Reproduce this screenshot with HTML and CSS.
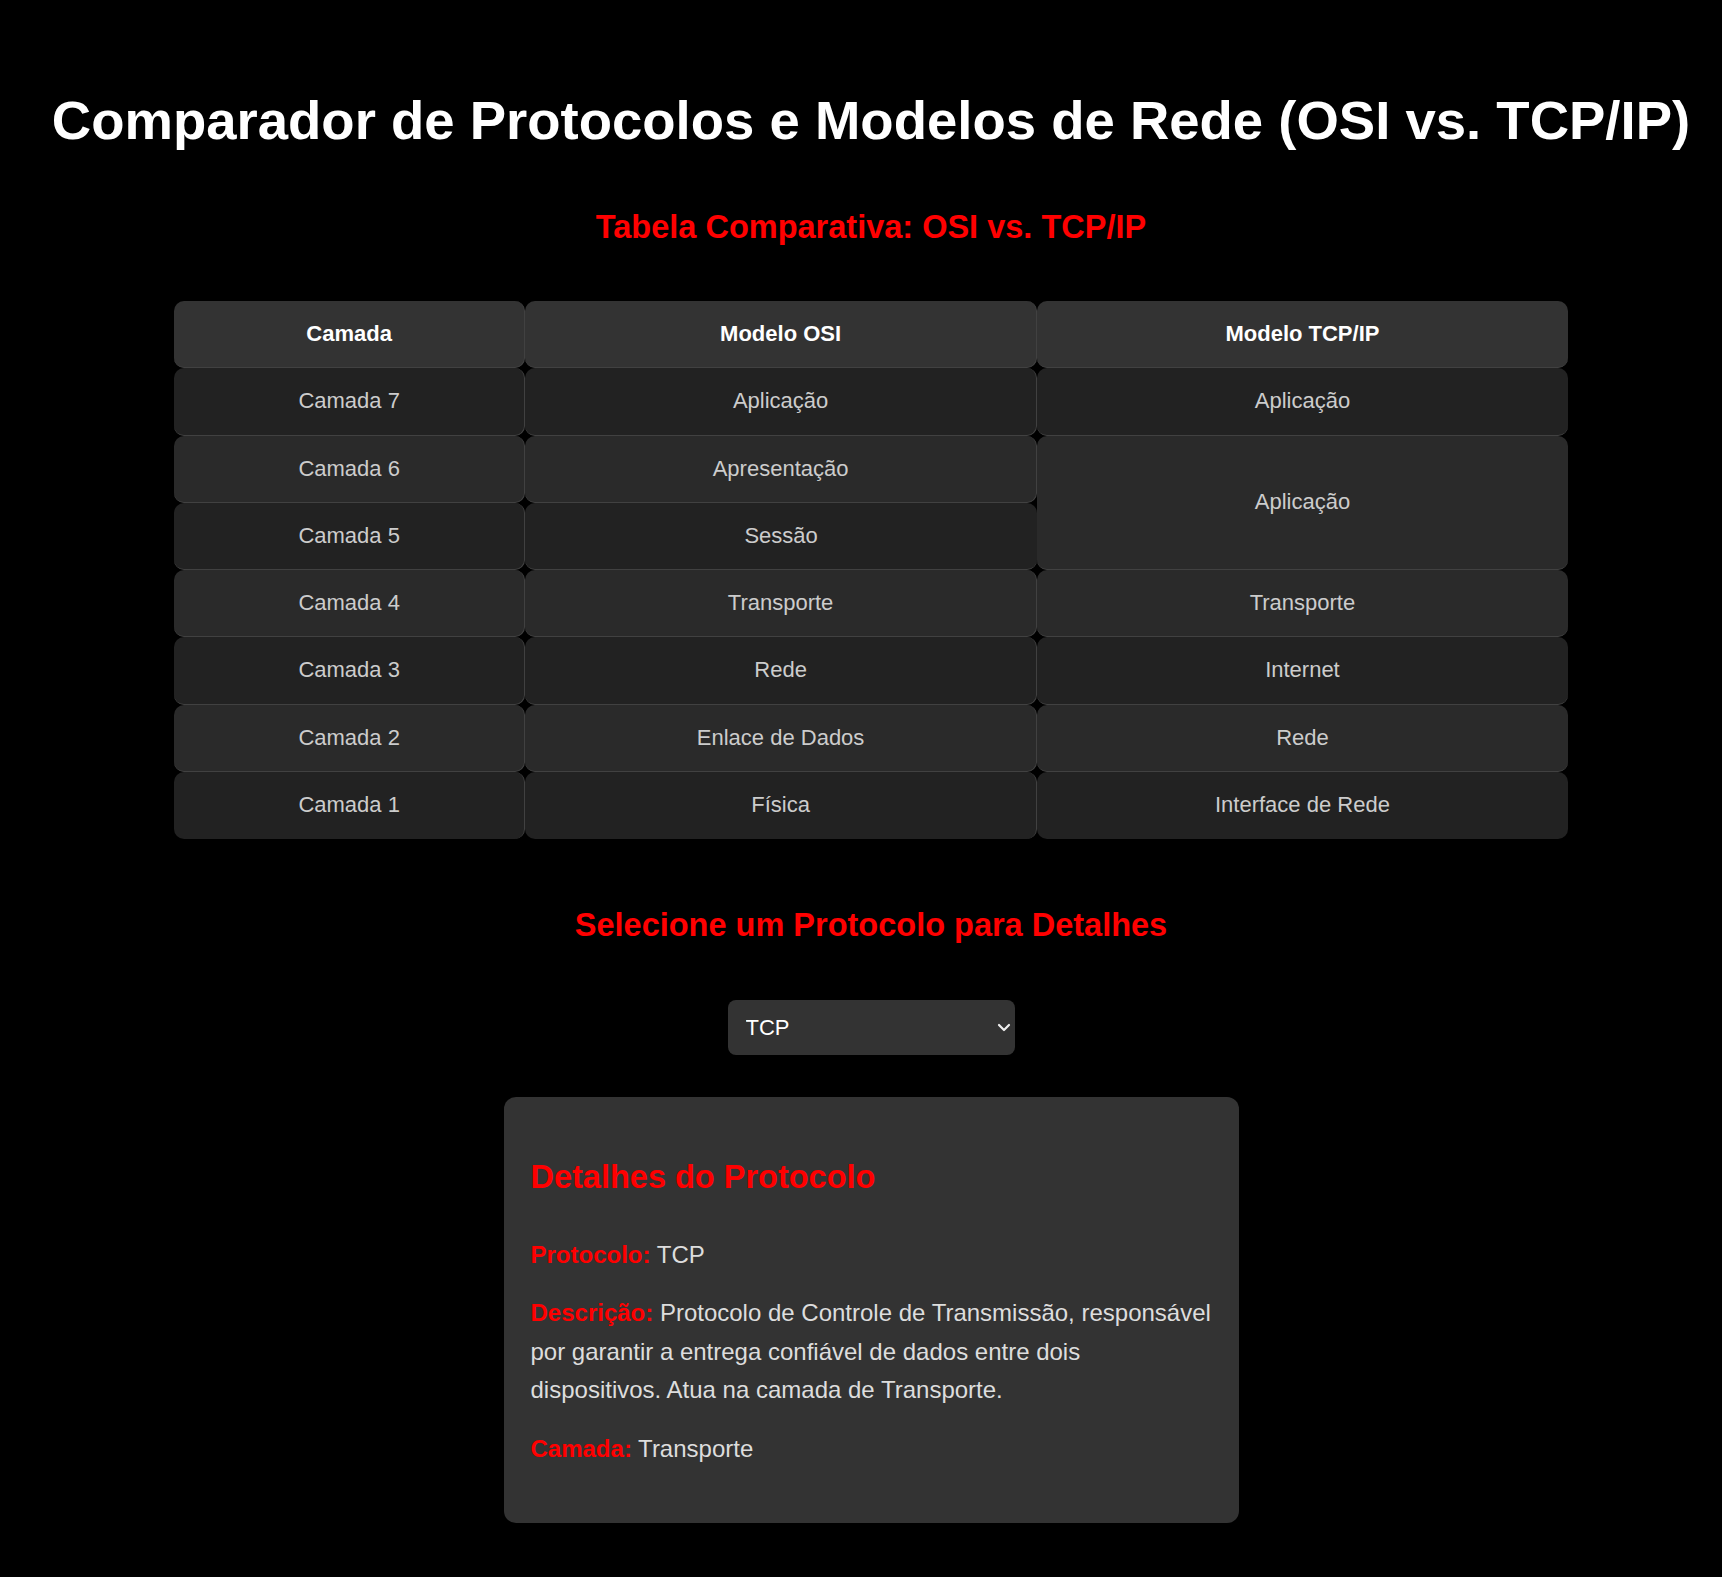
FILE: index.html
```html
<!DOCTYPE html>
<html lang="pt-BR">
<head>
<meta charset="utf-8">
<title>Comparador de Protocolos</title>
<link rel="stylesheet" href="styles.css">
</head>
<body>
<div class="page">
  <h1 class="title">Comparador de Protocolos e Modelos de Rede (OSI vs. TCP/IP)</h1>
  <h2 class="section-title first">Tabela Comparativa: OSI vs. TCP/IP</h2>
  <table class="compare">
    <thead>
      <tr>
        <th class="c1">Camada</th>
        <th class="c2">Modelo OSI</th>
        <th class="c3">Modelo TCP/IP</th>
      </tr>
    </thead>
    <tbody>
      <tr><td>Camada 7</td><td>Aplicação</td><td>Aplicação</td></tr>
      <tr><td>Camada 6</td><td>Apresentação</td><td rowspan="2">Aplicação</td></tr>
      <tr><td>Camada 5</td><td>Sessão</td></tr>
      <tr><td>Camada 4</td><td>Transporte</td><td>Transporte</td></tr>
      <tr><td>Camada 3</td><td>Rede</td><td>Internet</td></tr>
      <tr><td>Camada 2</td><td>Enlace de Dados</td><td>Rede</td></tr>
      <tr><td>Camada 1</td><td>Física</td><td>Interface de Rede</td></tr>
    </tbody>
  </table>
  <h2 class="section-title second">Selecione um Protocolo para Detalhes</h2>
  <div class="select-wrap">
    <select class="proto-select">
      <option>TCP</option>
      <option>UDP</option>
      <option>IP</option>
      <option>HTTP</option>
    </select>
    <svg class="chevron" width="14" height="9" viewBox="0 0 14 9" aria-hidden="true"><path d="M2 2 L7 7 L12 2" fill="none" stroke="#eeeeee" stroke-width="2.2" stroke-linecap="round" stroke-linejoin="round"/></svg>
  </div>
  <div class="card">
    <h2 class="card-title">Detalhes do Protocolo</h2>
    <p><strong>Protocolo:</strong> TCP</p>
    <p><strong>Descrição:</strong> Protocolo de Controle de Transmissão, responsável por garantir a entrega confiável de dados entre dois dispositivos. Atua na camada de Transporte.</p>
    <p><strong>Camada:</strong> Transporte</p>
  </div>
</div>
</body>
</html>
```

FILE: styles.css
```css
html, body {
  margin: 0;
  padding: 0;
  background: #000;
}

body {
  font-family: "Liberation Sans", Arial, sans-serif;
  color: #ffffff;
}

.page {
  padding: 90px 0 50px 20px;
}

.title {
  margin: 0;
  font-size: 54.5px;
  line-height: 62px;
  font-weight: bold;
  text-align: center;
  color: #ffffff;
}

.section-title {
  font-size: 32.5px;
  line-height: 37px;
  font-weight: bold;
  color: #ff0000;
  text-align: center;
}

.section-title.first {
  margin: 57px 0 55px;
}

.section-title.second {
  margin: 68px 0 56px;
}

.compare {
  width: 1394px;
  margin: 0 auto;
  border-collapse: separate;
  border-spacing: 0;
  font-size: 22px;
}

.compare tr {
  height: 67.25px;
}

.compare th,
.compare td {
  padding: 0 12px;
  text-align: center;
  vertical-align: middle;
  border-radius: 10px;
  border-bottom: 1px solid #414141;
  border-right: 1px solid #414141;
}

.compare th:last-child,
.compare td:last-child {
  border-right: none;
}

.compare tbody tr:last-child td {
  border-bottom: none;
}

.compare th {
  background: #333333;
  color: #ffffff;
  font-weight: bold;
}

.compare .c1 { width: 25.2%; }
.compare .c2 { width: 36.7%; }
.compare .c3 { width: 38.1%; }

.compare td {
  color: #cccccc;
}

.compare tbody tr:nth-child(odd) td {
  background: #222222;
}

.compare tbody tr:nth-child(even) td {
  background: #2a2a2a;
}

.select-wrap {
  position: relative;
  width: 287px;
  height: 55px;
  margin: 0 auto;
}

.proto-select {
  appearance: none;
  -webkit-appearance: none;
  width: 100%;
  height: 100%;
  box-sizing: border-box;
  padding: 0 40px 0 18px;
  border: none;
  border-radius: 8px;
  background: #333333;
  color: #ffffff;
  font-family: "Liberation Sans", Arial, sans-serif;
  font-size: 22px;
  outline: none;
}

.chevron {
  position: absolute;
  right: 4px;
  top: 23px;
  pointer-events: none;
}

.card {
  box-sizing: border-box;
  width: 735px;
  margin: 42px auto 0;
  padding: 27px 24px 35px 27px;
  background: #333333;
  border-radius: 12px;
  box-shadow: 0 2px 8px rgba(0, 0, 0, 0.5);
}

.card-title {
  margin: 35px 0 40px;
  font-size: 32.5px;
  line-height: 37px;
  font-weight: bold;
  color: #ff0000;
}

.card p {
  margin: 20px 0;
  font-size: 24px;
  line-height: 38.4px;
  color: #dddddd;
}

.card-title + p {
  margin-top: 0;
}

.card p strong {
  color: #ff0000;
  font-weight: bold;
}
```
